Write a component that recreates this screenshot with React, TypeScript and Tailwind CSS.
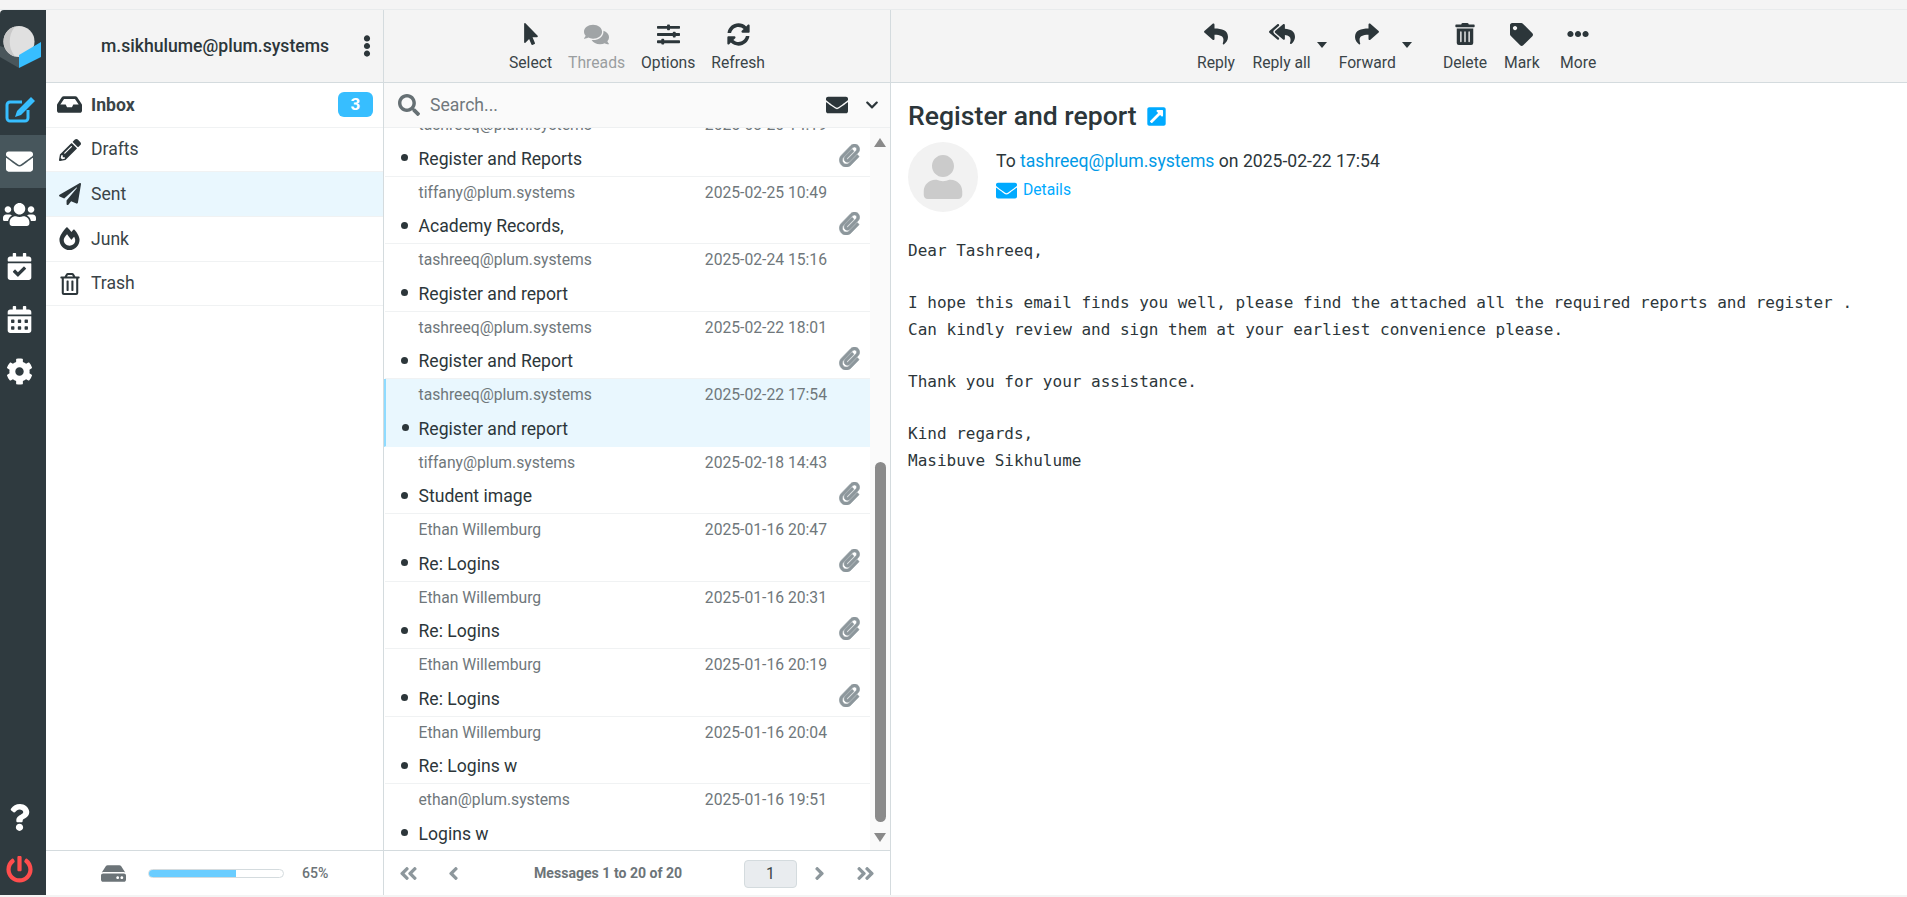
import React from "react";
import {
  FaEnvelope, FaUsers, FaCalendarCheck, FaCalendarAlt, FaCog, FaQuestion, FaPowerOff, FaInbox, FaPencilAlt, FaPaperPlane,
  FaFireAlt, FaRegTrashAlt, FaMousePointer, FaComments, FaSlidersH, FaSyncAlt, FaSearch, FaChevronDown, FaEllipsisV,
  FaReply, FaReplyAll, FaShare, FaTrashAlt, FaTag, FaEllipsisH, FaHdd, FaAngleDoubleLeft, FaAngleLeft, FaAngleRight,
  FaAngleDoubleRight, FaPaperclip, FaExternalLinkSquareAlt, FaUser,
} from "react-icons/fa";

const Logo = () => (
  <svg viewBox="0 0 46 42" className="w-[46px] h-[42px]">
    <polygon points="0,20 19,27 19,42 0,31" fill="#4a565b" />
    <circle cx="19" cy="15.5" r="15.5" fill="#e0e0e0" />
    <path d="M15 0.5 A15.5 15.5 0 0 0 15 30.5 A24 24 0 0 1 15 0.5" fill="#c8c8c8" />
    <polygon points="19,29 41,16 41,31 19,42" fill="#37beff" />
  </svg>
);

const Compose = () => (
  <svg viewBox="0 0 32 27" className="w-[32px] h-[27px] -mt-[2px]">
    <path d="M18 6 H6 a3 3 0 0 0 -3 3 V22 a3 3 0 0 0 3 3 H21 a3 3 0 0 0 3 -3 V14" fill="none" stroke="#37beff" strokeWidth="3" />
    <path d="M27 1 L31 5 L17 19 L11 21 L13 15 Z" fill="#37beff" />
  </svg>
);

const folders = [
  { name: "Inbox", Icon: FaInbox, size: 25, bold: true, badge: "3" },
  { name: "Drafts", Icon: FaPencilAlt, size: 22 },
  { name: "Sent", Icon: FaPaperPlane, size: 22, selected: true },
  { name: "Junk", Icon: FaFireAlt, size: 23 },
  { name: "Trash", Icon: FaRegTrashAlt, size: 22 },
];

const messages = [
  { from: "tashreeq@plum.systems", date: "2025-03-20 14:19", subject: "Register and Reports", clip: true },
  { from: "tiffany@plum.systems", date: "2025-02-25 10:49", subject: "Academy Records,", clip: true },
  { from: "tashreeq@plum.systems", date: "2025-02-24 15:16", subject: "Register and report" },
  { from: "tashreeq@plum.systems", date: "2025-02-22 18:01", subject: "Register and Report", clip: true },
  { from: "tashreeq@plum.systems", date: "2025-02-22 17:54", subject: "Register and report", selected: true },
  { from: "tiffany@plum.systems", date: "2025-02-18 14:43", subject: "Student image", clip: true },
  { from: "Ethan Willemburg", date: "2025-01-16 20:47", subject: "Re: Logins", clip: true },
  { from: "Ethan Willemburg", date: "2025-01-16 20:31", subject: "Re: Logins", clip: true },
  { from: "Ethan Willemburg", date: "2025-01-16 20:19", subject: "Re: Logins", clip: true },
  { from: "Ethan Willemburg", date: "2025-01-16 20:04", subject: "Re: Logins w" },
  { from: "ethan@plum.systems", date: "2025-01-16 19:51", subject: "Logins w" },
];

const ToolBtn = ({ Icon, label, size = 22, muted = false, caret = false, w = "" }: any) => (
  <div className={`relative flex flex-col items-center ${w} ${muted ? "text-[#a0a4a6]" : "text-[#2c363a]"}`}>
    <div className="h-[26px] flex items-center justify-center"><Icon size={size} /></div>
    <div className={`text-[15.7px] leading-5 mt-[6px] whitespace-nowrap ${muted ? "text-[#9a9ea0]" : "text-[#3a4448]"}`}>{label}</div>
    {caret && <span className="absolute right-[-16px] top-[21px] w-0 h-0 border-x-[5px] border-x-transparent border-t-[6px] border-t-[#2c363a]" />}
  </div>
);

export default function App() {
  return (
    <div className="h-[897px] w-[1907px] bg-[#f4f4f4] pt-[9px] pb-[2px] overflow-hidden text-[#2c363a]" style={{ fontFamily: "Roboto, sans-serif" }}>
      <div className="h-full flex border-t border-[#e8ebec] bg-white">
        {/* rail */}
        <div className="w-[46px] shrink-0 bg-[#2f3a3f] rounded-tl-[4px] flex flex-col items-center text-white">
          <div className="h-[75px] pt-[16px]"><Logo /></div>
          <div className="h-[50px] w-full pr-[7px] flex items-center justify-center"><Compose /></div>
          <div className="h-[53px] w-full pr-[7px] bg-[#47565c] flex items-center justify-center"><FaEnvelope size={27} /></div>
          <div className="h-[52.5px] w-full pr-[7px] flex items-center justify-center"><FaUsers size={33} /></div>
          <div className="h-[52.5px] w-full pr-[7px] flex items-center justify-center"><FaCalendarCheck size={27} /></div>
          <div className="h-[52.5px] w-full pr-[7px] flex items-center justify-center"><FaCalendarAlt size={27} /></div>
          <div className="h-[52.5px] w-full pr-[7px] flex items-center justify-center"><FaCog size={27} /></div>
          <div className="mt-auto h-[52px] w-full pr-[7px] flex items-center justify-center"><FaQuestion size={27} /></div>
          <div className="h-[52px] w-full pr-[7px] flex items-center justify-center text-[#ff4d4d]"><FaPowerOff size={27} /></div>
        </div>

        {/* folders */}
        <div className="w-[338px] shrink-0 flex flex-col border-r border-[#d4dbde]">
          <div className="h-[73px] shrink-0 bg-[#f4f4f4] border-b border-[#d4dbde] flex items-center relative">
            <div className="w-full pl-[55px] text-[17.6px] font-medium text-[#2c363a]">m.sikhulume@plum.systems</div>
            <FaEllipsisV size={22} className="absolute right-[5px] top-[25px] text-[#2c363a]" />
          </div>
          <div className="flex-1">
            {folders.map((f) => (
              <div key={f.name} className={`h-[44.7px] flex items-center border-b border-[#f0f2f3] pl-[11px] pr-[10px] text-[17.6px] ${f.selected ? "bg-[#e9f7fe]" : ""} ${f.bold ? "font-bold" : ""}`}>
                <span className="w-[25px] flex justify-center"><f.Icon size={f.size} /></span>
                <span className="ml-[9px] flex-1 text-[#3a4448]">{f.name}</span>
                {f.badge && <span className="w-[35px] h-[25px] rounded-[6px] bg-[#37beff] text-white text-[17px] font-bold flex items-center justify-center">{f.badge}</span>}
              </div>
            ))}
          </div>
          <div className="h-[45px] shrink-0 border-t border-[#d4dbde] pt-[1px] flex items-center">
            <FaHdd size={25} className="ml-[55px] text-[#6c7478]" />
            <div className="ml-[22px] w-[136px] h-[9px] rounded-full border border-[#d4dbde] overflow-hidden"><div className="h-full w-[65%] bg-[#6acdff]" /></div>
            <span className="ml-[18px] text-[14.08px] font-medium text-[#6c7478]">65%</span>
          </div>
        </div>

        {/* list */}
        <div className="w-[507px] shrink-0 flex flex-col border-r border-[#d4dbde]">
          <div className="h-[73px] shrink-0 bg-[#f4f4f4] border-b border-[#d4dbde] flex justify-center pt-[11px] gap-[16px]">
            <ToolBtn Icon={FaMousePointer} label="Select" />
            <ToolBtn Icon={FaComments} label="Threads" size={25} muted />
            <ToolBtn Icon={FaSlidersH} label="Options" size={23} />
            <ToolBtn Icon={FaSyncAlt} label="Refresh" size={23} />
          </div>
          <div className="h-[45px] shrink-0 bg-[#fafafa] border-b border-[#eef0f1] flex items-center pl-[14px] pr-[11px]">
            <FaSearch size={22} className="text-[#667074]" />
            <span className="ml-[10px] flex-1 text-[17.6px] text-[#70787c]">Search...</span>
            <FaEnvelope size={22} className="text-[#2c363a]" />
            <FaChevronDown size={14} className="ml-[17px] text-[#2c363a]" />
          </div>
          <div className="flex-1 flex min-h-0">
            <div className="flex-1 overflow-hidden min-w-0">
              <div className="-mt-[19px]">
                {messages.map((m, i) => (
                  <div key={i} className={`h-[67.5px] border-b relative pl-[33.5px] pr-[43px] ${m.selected ? "bg-[#e9f7fe] border-l-2 border-l-[#8edbff] border-b-[#e9f7fe]" : "ml-[1px] border-[#f0f2f3]"}`}>
                    <div className={`flex justify-between pt-[6px] text-[15.7px] leading-5 text-[#6f777b] ${m.selected ? "-ml-[1px]" : ""}`}>
                      <span>{m.from}</span><span>{m.date}</span>
                    </div>
                    <div className={`mt-[13.7px] text-[17.6px] leading-5 text-[#2c363a] ${m.selected ? "-ml-[1px]" : ""}`}>{m.subject}</div>
                    <span className="absolute left-[16px] top-[45px] w-[7px] h-[7px] rounded-full bg-[#2c363a]" />
                    {m.clip && <FaPaperclip size={23} stroke="currentColor" strokeWidth={14} className="absolute right-[9px] top-[35px] text-[#8d979c]" />}
                  </div>
                ))}
              </div>
            </div>
            <div className="w-[20px] shrink-0 bg-[#fafafa] flex flex-col items-center">
              <span className="mt-[10px] w-0 h-0 border-x-[6px] border-x-transparent border-b-[9px] border-b-[#8a8a8a]" />
              <div className="mt-[315px] w-[11px] h-[360px] rounded-full bg-[#8a8a8a]" />
              <span className="mt-[11px] w-0 h-0 border-x-[6px] border-x-transparent border-t-[9px] border-t-[#8a8a8a]" />
            </div>
          </div>
          <div className="h-[45px] shrink-0 border-t border-[#d4dbde] pt-[1px] flex items-center text-[#8d979c]">
            <FaAngleDoubleLeft size={21} className="ml-[14px]" />
            <FaAngleLeft size={21} className="ml-[24px]" />
            <span className="ml-[70px] w-[147px] whitespace-nowrap text-[14.08px] font-bold text-[#6c7478]">Messages 1 to 20 of 20</span>
            <span className="ml-[63px] w-[53px] h-[28px] rounded-[4px] bg-[#e9ecef] border border-[#d4dbde] flex items-center justify-center text-[15.84px] text-[#3a4448]">1</span>
            <FaAngleRight size={21} className="ml-[12px]" />
            <FaAngleDoubleRight size={21} className="ml-[25px]" />
          </div>
        </div>

        {/* content */}
        <div className="flex-1 min-w-0 flex flex-col">
          <div className="h-[73px] shrink-0 bg-[#f4f4f4] border-b border-[#d4dbde] flex pt-[11px] pl-[306px]">
            <ToolBtn Icon={FaReply} label="Reply" size={24} />
            <ToolBtn Icon={FaReplyAll} label="Reply all" size={26} caret w="ml-[17.5px]" />
            <ToolBtn Icon={FaShare} label="Forward" size={24} caret w="ml-[28px]" />
            <ToolBtn Icon={FaTrashAlt} label="Delete" w="ml-[47px]" />
            <ToolBtn Icon={FaTag} label="Mark" size={23} w="ml-[17px]" />
            <ToolBtn Icon={FaEllipsisH} label="More" w="ml-[20.5px]" />
          </div>
          <div className="flex-1 pl-[17px] pt-[14px]">
            <div className="flex items-center h-[38px]">
              <h1 className="text-[26.6px] font-medium text-[#2c363a]">Register and report</h1>
              <FaExternalLinkSquareAlt size={21} className="ml-[9px] mt-[1px] text-[#00aaff]" />
            </div>
            <div className="flex mt-[7px]">
              <div className="w-[70px] h-[70px] rounded-full bg-[#f2f2f2] overflow-hidden flex items-center justify-center"><FaUser size={44} className="text-[#cbcbcb]" /></div>
              <div className="ml-[18px] pt-[7px] text-[17.6px] leading-6">
                <div>To <span className="text-[#0099e6]">tashreeq@plum.systems</span> on 2025-02-22 17:54</div>
                <div className="flex items-center mt-[5px] text-[15.7px] text-[#00aaff]"><FaEnvelope size={21} /><span className="ml-[6px]">Details</span></div>
              </div>
            </div>
            <pre className="mt-[26px] text-[16px] leading-[26.2px] text-[#2c363a]" style={{ fontFamily: "'DejaVu Sans Mono', monospace" }}>{`Dear Tashreeq,

I hope this email finds you well, please find the attached all the required reports and register .
Can kindly review and sign them at your earliest convenience please.

Thank you for your assistance.

Kind regards,
Masibuve Sikhulume`}</pre>
          </div>
        </div>
      </div>
    </div>
  );
}
